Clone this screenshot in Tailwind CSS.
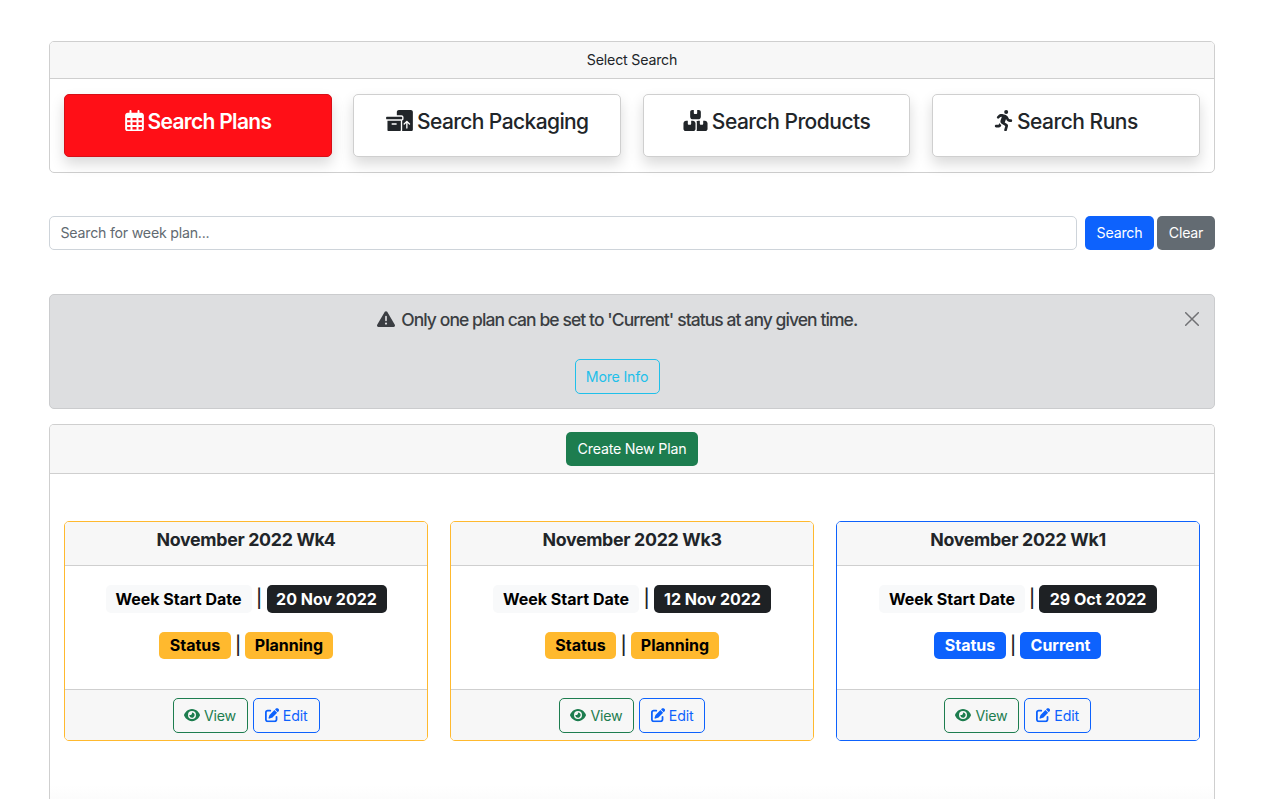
<!DOCTYPE html>
<html lang="en">
<head>
<meta charset="utf-8">
<title>Search Plans</title>
<script src="https://cdn.jsdelivr.net/npm/@tailwindcss/browser@4"></script>
</head>
<body class="h-[799px] overflow-hidden bg-white pl-[49px] pt-[41px] font-['Inter',sans-serif] text-[14.2px] leading-[21px] tracking-[-0.2px] text-[#212529]">
<svg class="hidden">
  <symbol id="calendar" viewBox="0 0 448 512"><path d="M152 64H296V24C296 10.75 306.7 0 320 0C333.3 0 344 10.75 344 24V64H384C419.3 64 448 92.65 448 128V448C448 483.3 419.3 512 384 512H64C28.65 512 0 483.3 0 448V128C0 92.65 28.65 64 64 64H104V24C104 10.75 114.7 0 128 0C141.3 0 152 10.75 152 24V64zM48 248H128V192H48V248zM48 296V360H128V296H48zM176 296V360H272V296H176zM320 296V360H400V296H320zM400 192H320V248H400V192zM400 408H320V464H384C392.8 464 400 456.8 400 448V408zM272 408H176V464H272V408zM128 408H48V448C48 456.8 55.16 464 64 464H128V408zM272 192H176V248H272V192z"/></symbol>
  <symbol id="packing" viewBox="0 0 640 512"><path d="M256 48c0-26.5 21.5-48 48-48H592c26.5 0 48 21.5 48 48V464c0 26.5-21.5 48-48 48H381.3c1.8-5 2.7-10.4 2.7-16V253.3c18.6-6.6 32-24.4 32-45.3V176c0-26.5-21.5-48-48-48H256V48zM571.3 347.3c6.2-6.2 6.2-16.4 0-22.6l-64-64c-6.2-6.2-16.4-6.2-22.6 0l-64 64c-6.2 6.2-6.2 16.4 0 22.6s16.4 6.2 22.6 0L480 310.6V432c0 8.8 7.2 16 16 16s16-7.2 16-16V310.6l36.7 36.7c6.2 6.2 16.4 6.2 22.6 0zM0 176c0-8.8 7.2-16 16-16H368c8.8 0 16 7.2 16 16v32c0 8.8-7.2 16-16 16H16c-8.8 0-16-7.2-16-16V176zm352 80V480c0 17.7-14.3 32-32 32H64c-17.7 0-32-14.3-32-32V256H352zM144 320c-8.8 0-16 7.2-16 16s7.2 16 16 16h96c8.8 0 16-7.2 16-16s-7.2-16-16-16H144z"/></symbol>
  <symbol id="boxes" viewBox="0 0 576 512"><path d="M248 0H208c-26.5 0-48 21.5-48 48V160c0 35.3 28.7 64 64 64H352c35.3 0 64-28.7 64-64V48c0-26.5-21.5-48-48-48H328V80c0 8.8-7.2 16-16 16H264c-8.8 0-16-7.2-16-16V0zM64 256c-35.3 0-64 28.7-64 64V448c0 35.3 28.7 64 64 64H224c35.3 0 64-28.7 64-64V320c0-35.3-28.7-64-64-64H184v80c0 8.8-7.2 16-16 16H120c-8.8 0-16-7.2-16-16V256H64zM352 512H512c35.3 0 64-28.7 64-64V320c0-35.3-28.7-64-64-64H472v80c0 8.8-7.2 16-16 16H408c-8.8 0-16-7.2-16-16V256H352c-15 0-28.8 5.1-39.7 13.8c4.9 10.4 7.7 22 7.7 34.2V464c0 12.2-2.8 23.8-7.7 34.2C323.2 506.9 337 512 352 512z"/></symbol>
  <symbol id="running" viewBox="0 0 448 512"><path transform="translate(16 0)" d="M320 48a48 48 0 1 0-96 0 48 48 0 1 0 96 0zM125.7 175.5c9.9-9.9 23.4-15.5 37.5-15.5c1.9 0 3.8 .1 5.6 .3L137.6 254c-9.3 28 1.7 58.8 26.8 74.5l86.2 53.9-25.4 88.8c-4.9 17 5 34.7 22 39.6s34.7-5 39.6-22l28.7-100.4c5.9-20.6-2.6-42.6-20.7-53.9L238 299l30.9-82.4 5.1 12.3C289 264.7 323.9 288 362.7 288H384c17.7 0 32-14.3 32-32s-14.3-32-32-32H362.7c-12.9 0-24.6-7.8-29.5-19.7l-6.3-15c-14.6-35.1-44.1-61.9-80.5-73.1l-48.7-15c-11.1-3.4-22.7-5.2-34.4-5.2c-31 0-60.8 12.3-82.7 34.3L57.4 153.4c-12.5 12.5-12.5 32.8 0 45.3s32.8 12.5 45.3 0l23.1-23.1zM91.2 352H32c-17.7 0-32 14.3-32 32s14.3 32 32 32h69.6c19 0 36.2-11.2 43.9-28.5L157 361.6l-9.5-6c-17.5-10.9-30.5-26.8-37.9-44.9L91.2 352z"/></symbol>
  <symbol id="warning" viewBox="0 0 512 512"><path d="M256 32c14.2 0 27.3 7.5 34.5 19.8l216 368c7.3 12.4 7.3 27.7 .2 40.1S486.3 480 472 480H40c-14.3 0-27.6-7.7-34.7-20.1s-7-27.8 .2-40.1l216-368C228.7 39.5 241.8 32 256 32zm0 128c-13.3 0-24 10.7-24 24V296c0 13.3 10.7 24 24 24s24-10.7 24-24V184c0-13.3-10.7-24-24-24zm32 224a32 32 0 1 0-64 0 32 32 0 1 0 64 0z"/></symbol>
  <symbol id="eye" viewBox="0 0 576 512"><path d="M288 32c-80.8 0-145.5 36.8-192.6 80.6C48.6 156 17.3 208 2.5 243.7c-3.3 7.9-3.3 16.7 0 24.6C17.3 304 48.6 356 95.4 399.4C142.5 443.2 207.2 480 288 480s145.5-36.8 192.6-80.6c46.8-43.5 78.1-95.4 93-131.1c3.3-7.9 3.3-16.7 0-24.6c-14.9-35.7-46.2-87.7-93-131.1C433.5 68.8 368.8 32 288 32zM144 256a144 144 0 1 1 288 0 144 144 0 1 1-288 0zm144-64c0 35.3-28.7 64-64 64c-7.1 0-13.9-1.2-20.3-3.3c-5.5-1.8-11.9 1.6-11.7 7.4c.3 6.9 1.3 13.8 3.2 20.7c13.7 51.2 66.4 81.6 117.6 67.9s81.6-66.4 67.9-117.6c-11.1-41.5-47.8-69.4-88.6-71.1c-5.8-.2-9.2 6.1-7.4 11.7c2.1 6.4 3.3 13.2 3.3 20.3z"/></symbol>
  <symbol id="edit" viewBox="0 0 512 512"><path d="M471.6 21.7c-21.9-21.9-57.3-21.9-79.2 0L362.3 51.7l97.9 97.9 30.1-30.1c21.9-21.9 21.9-57.3 0-79.2L471.6 21.7zm-299.2 220c-6.1 6.1-10.8 13.6-13.5 21.9l-29.6 88.8c-2.9 8.6-.6 18.1 5.8 24.6s15.9 8.7 24.6 5.8l88.8-29.6c8.2-2.7 15.7-7.4 21.9-13.5L437.7 172.3 339.7 74.3 172.4 241.7zM96 64C43 64 0 107 0 160V416c0 53 43 96 96 96H352c53 0 96-43 96-96V320c0-17.7-14.3-32-32-32s-32 14.3-32 32v96c0 17.7-14.3 32-32 32H96c-17.7 0-32-14.3-32-32V160c0-17.7 14.3-32 32-32h96c17.7 0 32-14.3 32-32s-14.3-32-32-32H96z"/></symbol>
</svg>

<main class="w-[1166px] whitespace-nowrap">
  <section class="h-[132px] rounded-[5px] border border-[#cfcfcf]">
    <div class="flex h-[37px] items-center justify-center rounded-t-[4px] border-b border-[#cfcfcf] bg-[#f7f7f7] pb-[2px]">Select Search</div>
    <div class="grid grid-cols-4 gap-[21.5px] pl-[14px] pr-[14.2px] pt-[15px] text-[21px] font-medium leading-[26px] tracking-[-0.6px]">
      <a class="flex h-[63px] justify-center gap-1 rounded-[5px] border border-[#d60f17] bg-[#ff0f17] pt-[14px] font-semibold tracking-[-0.7px] text-white shadow-[0_7px_14px_rgba(0,0,0,0.15)]"><svg class="mt-[1px] h-[21.4px] w-[19px] fill-current"><use href="#calendar"/></svg><span>Search Plans</span></a>
      <a class="flex h-[63px] justify-center gap-1 rounded-[5px] border border-[#cfcfcf] bg-white pt-[14px] shadow-[0_7px_14px_rgba(0,0,0,0.15)]"><svg class="mt-[1px] h-[21.4px] w-[27px] fill-current"><use href="#packing"/></svg><span>Search Packaging</span></a>
      <a class="flex h-[63px] justify-center gap-1 rounded-[5px] border border-[#cfcfcf] bg-white pt-[14px] tracking-[-0.5px] shadow-[0_7px_14px_rgba(0,0,0,0.15)]"><svg class="mt-[1px] h-[21.4px] w-[25px] fill-current"><use href="#boxes"/></svg><span>Search Products</span></a>
      <a class="flex h-[63px] justify-center gap-1 rounded-[5px] border border-[#cfcfcf] bg-white pt-[14px] tracking-[-0.5px] shadow-[0_7px_14px_rgba(0,0,0,0.15)]"><svg class="mt-[1px] h-[21.4px] w-[19px] fill-current"><use href="#running"/></svg><span>Search Runs</span></a>
    </div>
  </section>

  <form class="mt-[43px] flex h-[34px]">
    <div class="flex w-[1028px] items-center rounded-[5px] border border-[#ced4da] pb-[2px] pl-[10.5px] tracking-[-0.23px] text-[#626a71]">Search for week plan...</div>
    <button type="button" class="ml-2 w-[69px] rounded-[5px] bg-[#0d62fd] pb-[2px] text-white">Search</button>
    <button type="button" class="ml-[3px] w-[58px] rounded-[5px] bg-[#636b72] pb-[2px] text-white">Clear</button>
  </form>

  <section class="mt-[44px] flex h-[115px] rounded-[5px] border border-[#cbccce] bg-[#dddee0] text-[#3b3e43]">
    <div class="flex grow flex-col items-center pl-[15px] pt-[14px]">
      <div class="flex gap-[6.5px] text-[17.5px] font-medium leading-[22px] tracking-[-0.93px]"><svg class="mt-[1px] h-[18px] w-[18px] fill-current"><use href="#warning"/></svg><span>Only one plan can be set to 'Current' status at any given time.</span></div>
      <button type="button" class="mt-[28px] h-[35px] w-[85px] rounded-[5px] border border-[#1fc0ea] text-[#1fc0ea]">More Info</button>
    </div>
    <div class="w-[45px] pl-[16px] pt-[17px]"><svg class="h-[14px] w-[14px]" viewBox="0 0 14 14"><path d="M.7.7l12.6 12.6M13.3.7L.7 13.3" fill="none" stroke="#707174" stroke-width="1.5" stroke-linecap="round"/></svg></div>
  </section>

  <section class="mt-[15px] h-[375px] rounded-t-[5px] border border-b-0 border-[#cfcfcf]">
    <div class="flex h-[49px] items-center justify-center rounded-t-[4px] border-b border-[#cfcfcf] bg-[#f7f7f7]">
      <button type="button" class="h-[34px] w-[132px] rounded-[5px] bg-[#1d7d4f] pb-[2px] text-white">Create New Plan</button>
    </div>
    <div class="grid grid-cols-3 gap-[22px] px-[14px] pt-[47px]">
      <article class="flex h-[220px] flex-col rounded-[5px] border border-[#ffb92e]">
        <h5 class="h-[44px] rounded-t-[4px] border-b border-[#cfcfcf] bg-[#f7f7f7] pt-[7px] text-center text-[17.8px] font-bold leading-[22px] tracking-[-0.32px]">November 2022 Wk4</h5>
        <div class="grow pt-[19px] text-[16px] font-bold leading-[28px] tracking-normal text-black">
          <div class="flex h-[28px] justify-center"><span class="w-[146px] rounded-[5px] bg-[#f8f9fa] text-center">Week Start Date</span><span class="w-[15px] text-center text-[18px] font-medium leading-[28px] text-[#212529]">|</span><span class="w-[120px] rounded-[5px] bg-[#1e2124] text-center text-white">20 Nov 2022</span></div>
          <div class="mt-[19px] flex h-[27px] justify-center leading-[27px]"><span class="w-[72px] rounded-[5px] bg-[#ffb92e] text-center">Status</span><span class="w-[14px] text-center text-[18px] font-medium leading-[27px] text-[#212529]">|</span><span class="w-[88px] rounded-[5px] bg-[#ffb92e] text-center">Planning</span></div>
        </div>
        <div class="flex h-[51px] justify-center gap-[5px] rounded-b-[4px] border-t border-[#cfcfcf] bg-[#f7f7f7] pt-[8px]">
          <a class="flex h-[35px] w-[75px] items-center justify-center gap-1 rounded-[5px] border border-[#1d7d4f] text-[#1d7d4f]"><svg class="h-[14.2px] w-4 fill-current"><use href="#eye"/></svg>View</a>
          <a class="flex h-[35px] w-[67px] items-center justify-center gap-1 rounded-[5px] border border-[#0d62fd] text-[#0d62fd]"><svg class="h-[14.2px] w-[14.2px] fill-current"><use href="#edit"/></svg>Edit</a>
        </div>
      </article>
      <article class="flex h-[220px] flex-col rounded-[5px] border border-[#ffb92e]">
        <h5 class="h-[44px] rounded-t-[4px] border-b border-[#cfcfcf] bg-[#f7f7f7] pt-[7px] text-center text-[17.8px] font-bold leading-[22px] tracking-[-0.32px]">November 2022 Wk3</h5>
        <div class="grow pt-[19px] text-[16px] font-bold leading-[28px] tracking-normal text-black">
          <div class="flex h-[28px] justify-center"><span class="w-[146px] rounded-[5px] bg-[#f8f9fa] text-center">Week Start Date</span><span class="w-[15px] text-center text-[18px] font-medium leading-[28px] text-[#212529]">|</span><span class="w-[117px] rounded-[5px] bg-[#1e2124] text-center text-white">12 Nov 2022</span></div>
          <div class="mt-[19px] flex h-[27px] justify-center leading-[27px]"><span class="w-[71px] rounded-[5px] bg-[#ffb92e] text-center">Status</span><span class="w-[15px] text-center text-[18px] font-medium leading-[27px] text-[#212529]">|</span><span class="w-[88px] rounded-[5px] bg-[#ffb92e] text-center">Planning</span></div>
        </div>
        <div class="flex h-[51px] justify-center gap-[5px] rounded-b-[4px] border-t border-[#cfcfcf] bg-[#f7f7f7] pt-[8px]">
          <a class="flex h-[35px] w-[75px] items-center justify-center gap-1 rounded-[5px] border border-[#1d7d4f] text-[#1d7d4f]"><svg class="h-[14.2px] w-4 fill-current"><use href="#eye"/></svg>View</a>
          <a class="flex h-[35px] w-[66px] items-center justify-center gap-1 rounded-[5px] border border-[#0d62fd] text-[#0d62fd]"><svg class="h-[14.2px] w-[14.2px] fill-current"><use href="#edit"/></svg>Edit</a>
        </div>
      </article>
      <article class="flex h-[220px] flex-col rounded-[5px] border border-[#0d62fd]">
        <h5 class="h-[44px] rounded-t-[4px] border-b border-[#cfcfcf] bg-[#f7f7f7] pt-[7px] text-center text-[17.8px] font-bold leading-[22px] tracking-[-0.3px]">November 2022 Wk1</h5>
        <div class="grow pt-[19px] text-[16px] font-bold leading-[28px] tracking-normal text-black">
          <div class="flex h-[28px] justify-center"><span class="w-[146px] rounded-[5px] bg-[#f8f9fa] text-center">Week Start Date</span><span class="w-[14px] text-center text-[18px] font-medium leading-[28px] text-[#212529]">|</span><span class="w-[118px] rounded-[5px] bg-[#1e2124] text-center text-white">29 Oct 2022</span></div>
          <div class="mt-[19px] flex h-[27px] justify-center pr-px leading-[27px] text-white"><span class="w-[72px] rounded-[5px] bg-[#0d62fd] text-center">Status</span><span class="w-[14px] text-center text-[18px] font-medium leading-[27px] text-[#212529]">|</span><span class="w-[81px] rounded-[5px] bg-[#0d62fd] text-center">Current</span></div>
        </div>
        <div class="flex h-[51px] justify-center gap-[5px] rounded-b-[4px] border-t border-[#cfcfcf] bg-[#f7f7f7] pr-px pt-[8px]">
          <a class="flex h-[35px] w-[75px] items-center justify-center gap-1 rounded-[5px] border border-[#1d7d4f] text-[#1d7d4f]"><svg class="h-[14.2px] w-4 fill-current"><use href="#eye"/></svg>View</a>
          <a class="flex h-[35px] w-[67px] items-center justify-center gap-1 rounded-[5px] border border-[#0d62fd] text-[#0d62fd]"><svg class="h-[14.2px] w-[14.2px] fill-current"><use href="#edit"/></svg>Edit</a>
        </div>
      </article>
    </div>
    <div class="mt-[44px] h-[14px] bg-linear-to-b from-white to-[#fcfcfc]"></div>
  </section>
</main>
</body>
</html>
